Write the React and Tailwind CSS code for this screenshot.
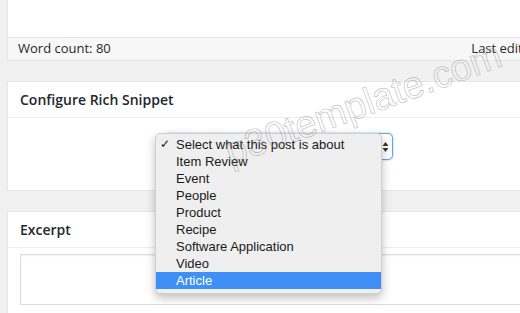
import React from 'react'

const options = [
    "Select what this post is about",
    "Item Review",
    "Event",
    "People",
    "Product",
    "Recipe",
    "Software Application",
    "Video",
    "Article",
];

function App() {
    return (
        <div className="relative w-[520px] h-[313px] overflow-hidden bg-[#f1f1f1] font-['Open_Sans',sans-serif] text-[#23282d]">
            <div className="ml-[7px] w-[540px]">
                {/* editor bottom */}
                <div className="bg-white border-l border-r border-b border-[#e5e5e5]">
                    <div className="h-[37px]"></div>
                    <div className="h-[23px] bg-[#f7f7f7] border-t border-[#e5e5e5] flex items-center justify-between pl-[10px] pr-[8px] text-[13px]">
                        <span>Word count: 80</span>
                        <span>Last edited</span>
                    </div>
                </div>

                {/* rich snippet box */}
                <div className="mt-[20px] bg-white border border-[#e5e5e5] h-[110px]">
                    <div className="h-[36px] flex items-center px-[12px] border-b border-[#eeeeee] text-[14px] font-semibold">
                        Configure Rich Snippet
                    </div>
                    <div className="pt-[15px] pl-[157px]">
                        <div className="w-[228px] h-[27px] rounded-[5px] border border-[#6aa3e0] shadow-[0_0_2px_rgba(30,140,190,0.6)] bg-white flex justify-end items-center pr-[3px]">
                            <svg width="7" height="12" viewBox="0 0 7 12">
                                <path d="M3.5 1 L6.5 5 L0.5 5 Z" fill="#333" />
                                <path d="M3.5 11 L6.5 7 L0.5 7 Z" fill="#333" />
                            </svg>
                        </div>
                    </div>
                </div>

                {/* excerpt box */}
                <div className="mt-[20px] bg-white border border-[#e5e5e5] h-[110px]">
                    <div className="h-[36px] flex items-center px-[12px] border-b border-[#eeeeee] text-[14px] font-semibold">
                        Excerpt
                    </div>
                    <div className="pt-[6px] pl-[12px]">
                        <div className="h-[51px] border border-[#dddddd] shadow-[inset_0_1px_2px_rgba(0,0,0,0.07)]"></div>
                    </div>
                </div>
            </div>

            {/* open select menu */}
            <div className="absolute left-[155px] top-[133px] w-[227px] pt-[2px] pb-[4px] rounded-[5px] bg-[#efefef] border border-[#cfcfcf] shadow-[0_4px_10px_rgba(0,0,0,0.25)] font-['Liberation_Sans',sans-serif] text-[13px] text-[#1a1a1a]">
                {options.map((o, i) => (
                    <div key={i} className={`relative h-[17px] leading-[17px] pl-[20px] ${i === 8 ? "bg-[#3f8ff6] text-white" : ""}`}>
                        {i === 0 && <span className="absolute left-[4px] top-0 text-[12px]">✓</span>}
                        {o}
                    </div>
                ))}
            </div>

            {/* watermark */}
            <div className="absolute left-[226px] top-[134px] origin-left rotate-[-20deg] font-['Liberation_Sans',sans-serif] text-[38px] leading-none text-transparent [-webkit-text-stroke:0.7px_rgba(140,140,140,0.55)] pointer-events-none whitespace-nowrap">
                p30template.com
            </div>
        </div>
    )
}

export default App
